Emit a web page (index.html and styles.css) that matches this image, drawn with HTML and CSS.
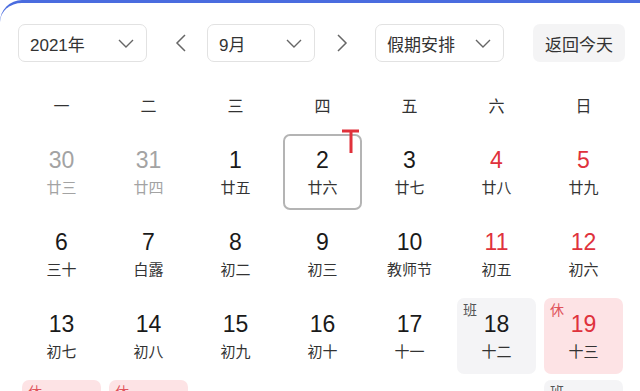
FILE: index.html
```html
<!DOCTYPE html>
<html lang="zh-CN">
<head>
    <meta charset="UTF-8">
    <meta name="viewport" content="width=device-width, initial-scale=1.0">
    <title>万年历</title>
    <link rel="stylesheet" href="styles.css">
</head>
<body>
    <div class="calendar-card">
        <!-- Toolbar -->
        <div class="toolbar">
            <div class="select select-year">
                <span>2021年</span>
                <svg class="chevron" width="16" height="9" viewBox="0 0 16 9"><path d="M1 1l7 7 7-7" fill="none" stroke="#666" stroke-width="1.4"/></svg>
            </div>
            <span class="arrow arrow-prev">
                <svg width="12" height="18" viewBox="0 0 12 18"><path d="M10 1L2 9l8 8" fill="none" stroke="#666" stroke-width="1.5"/></svg>
            </span>
            <div class="select select-month">
                <span>9月</span>
                <svg class="chevron" width="16" height="9" viewBox="0 0 16 9"><path d="M1 1l7 7 7-7" fill="none" stroke="#666" stroke-width="1.4"/></svg>
            </div>
            <span class="arrow arrow-next">
                <svg width="12" height="18" viewBox="0 0 12 18"><path d="M2 1l8 8-8 8" fill="none" stroke="#666" stroke-width="1.5"/></svg>
            </span>
            <div class="select select-holiday">
                <span>假期安排</span>
                <svg class="chevron" width="16" height="9" viewBox="0 0 16 9"><path d="M1 1l7 7 7-7" fill="none" stroke="#666" stroke-width="1.4"/></svg>
            </div>
            <button class="today-btn">返回今天</button>
        </div>

        <!-- Weekday header -->
        <div class="weekdays">
            <span>一</span><span>二</span><span>三</span><span>四</span><span>五</span><span>六</span><span>日</span>
        </div>

        <!-- Days -->
        <div class="days">
            <div class="day other"><div class="num">30</div><div class="lunar">廿三</div></div>
            <div class="day other"><div class="num">31</div><div class="lunar">廿四</div></div>
            <div class="day"><div class="num">1</div><div class="lunar">廿五</div></div>
            <div class="day selected">
                <div class="num">2</div><div class="lunar">廿六</div>
                <svg class="today-mark" width="18" height="24" viewBox="0 0 18 24"><path d="M0 2h17M9 2v22" fill="none" stroke="#e0313b" stroke-width="3"/></svg>
            </div>
            <div class="day"><div class="num">3</div><div class="lunar">廿七</div></div>
            <div class="day weekend"><div class="num">4</div><div class="lunar">廿八</div></div>
            <div class="day weekend"><div class="num">5</div><div class="lunar">廿九</div></div>

            <div class="day"><div class="num">6</div><div class="lunar">三十</div></div>
            <div class="day"><div class="num">7</div><div class="lunar">白露</div></div>
            <div class="day"><div class="num">8</div><div class="lunar">初二</div></div>
            <div class="day"><div class="num">9</div><div class="lunar">初三</div></div>
            <div class="day"><div class="num">10</div><div class="lunar">教师节</div></div>
            <div class="day weekend"><div class="num">11</div><div class="lunar">初五</div></div>
            <div class="day weekend"><div class="num">12</div><div class="lunar">初六</div></div>

            <div class="day"><div class="num">13</div><div class="lunar">初七</div></div>
            <div class="day"><div class="num">14</div><div class="lunar">初八</div></div>
            <div class="day"><div class="num">15</div><div class="lunar">初九</div></div>
            <div class="day"><div class="num">16</div><div class="lunar">初十</div></div>
            <div class="day"><div class="num">17</div><div class="lunar">十一</div></div>
            <div class="day work"><span class="tag">班</span><div class="num">18</div><div class="lunar">十二</div></div>
            <div class="day rest weekend"><span class="tag">休</span><div class="num">19</div><div class="lunar">十三</div></div>

            <div class="day rest"><span class="tag">休</span><div class="num">20</div><div class="lunar">十四</div></div>
            <div class="day rest"><span class="tag">休</span><div class="num">21</div><div class="lunar">中秋节</div></div>
            <div class="day"><div class="num">22</div><div class="lunar">十六</div></div>
            <div class="day"><div class="num">23</div><div class="lunar">秋分</div></div>
            <div class="day"><div class="num">24</div><div class="lunar">十八</div></div>
            <div class="day weekend"><div class="num">25</div><div class="lunar">十九</div></div>
            <div class="day work"><span class="tag">班</span><div class="num">26</div><div class="lunar">二十</div></div>
        </div>
    </div>
</body>
</html>
```

FILE: styles.css
```css
body {
    font-family: 'Liberation Sans', 'Noto Sans CJK SC', sans-serif;
    background-color: #fff;
    margin: 0;
    padding: 0;
    overflow: hidden;
    color: #222;
}

.calendar-card {
    width: 700px;
    border-top: 3px solid #4a6cdf;
    border-radius: 22px 22px 0 0;
    padding: 21px 0 0 18px;
    box-sizing: border-box;
}

.toolbar {
    display: flex;
    align-items: center;
    width: 607px;
}

.select {
    display: flex;
    align-items: center;
    justify-content: space-between;
    height: 38px;
    box-sizing: border-box;
    border: 1px solid #e2e2e2;
    border-radius: 7px;
    padding: 0 12px 0 11px;
    font-size: 17px;
    color: #333;
}

.select-year {
    width: 129px;
}

.select-month {
    width: 108px;
}

.select-holiday {
    width: 129px;
}

.arrow {
    display: flex;
    align-items: center;
}

.arrow-prev {
    margin: 0 20px 0 28px;
}

.arrow-next {
    margin: 0 27px 0 21px;
}

.today-btn {
    margin-left: auto;
    width: 92px;
    height: 38px;
    border: none;
    border-radius: 7px;
    background-color: #f4f4f5;
    font-family: inherit;
    font-size: 17px;
    color: #333;
    padding: 0;
}

.weekdays {
    display: grid;
    grid-template-columns: repeat(7, 87px);
    margin-top: 27px;
    height: 36px;
    line-height: 36px;
    font-size: 16px;
    color: #333;
    text-align: center;
}

.days {
    display: grid;
    grid-template-columns: repeat(7, 79px);
    grid-auto-rows: 76px;
    column-gap: 8px;
    row-gap: 6px;
    margin-top: 9px;
    padding-left: 4px;
}

.day {
    position: relative;
    box-sizing: border-box;
    border-radius: 7px;
    text-align: center;
    padding-top: 12px;
}

.num {
    font-size: 23px;
    line-height: 28px;
    color: #1a1a1a;
}

.lunar {
    margin-top: 4px;
    font-size: 15px;
    line-height: 20px;
    color: #333;
}

.day.other .num,
.day.other .lunar {
    color: #a3a3a3;
}

.day.weekend .num {
    color: #df323c;
}

.day.selected {
    border: 2px solid #b4b4b4;
    padding-top: 10px;
}

.today-mark {
    position: absolute;
    top: -7px;
    left: 57px;
}

.day.work {
    background-color: #f4f4f6;
}

.day.rest {
    background-color: #fde3e5;
}

.day.rest .num {
    color: #df323c;
}

.tag {
    position: absolute;
    top: 4px;
    left: 6px;
    font-size: 14px;
    line-height: 16px;
    color: #555;
}

.day.rest .tag {
    color: #e0545c;
}
```
